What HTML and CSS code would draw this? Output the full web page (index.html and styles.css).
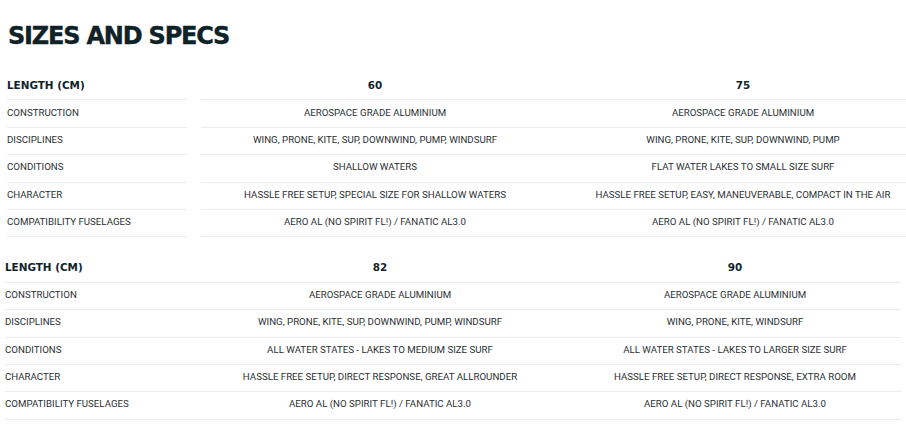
FILE: index.html
```html
<!DOCTYPE html>
<html>
<head>
<meta charset="utf-8">
<link rel="stylesheet" href="styles.css">
</head>
<body>
<main class="page">
  <h1 class="title">SIZES AND SPECS</h1>
  <div class="specs specs-a">
    <div class="cell label head">LENGTH (CM)</div>
    <div class="cell value head">60</div>
    <div class="cell value head">75</div>
    <div class="cell label">CONSTRUCTION</div>
    <div class="cell value">AEROSPACE GRADE ALUMINIUM</div>
    <div class="cell value">AEROSPACE GRADE ALUMINIUM</div>
    <div class="cell label">DISCIPLINES</div>
    <div class="cell value">WING, PRONE, KITE, SUP, DOWNWIND, PUMP, WINDSURF</div>
    <div class="cell value">WING, PRONE, KITE, SUP, DOWNWIND, PUMP</div>
    <div class="cell label">CONDITIONS</div>
    <div class="cell value">SHALLOW WATERS</div>
    <div class="cell value">FLAT WATER LAKES TO SMALL SIZE SURF</div>
    <div class="cell label">CHARACTER</div>
    <div class="cell value">HASSLE FREE SETUP, SPECIAL SIZE FOR SHALLOW WATERS</div>
    <div class="cell value">HASSLE FREE SETUP, EASY, MANEUVERABLE, COMPACT IN THE AIR</div>
    <div class="cell label">COMPATIBILITY FUSELAGES</div>
    <div class="cell value">AERO AL (NO SPIRIT FL!) / FANATIC AL3.0</div>
    <div class="cell value">AERO AL (NO SPIRIT FL!) / FANATIC AL3.0</div>
  </div>
  <div class="specs specs-b">
    <div class="cell label head">LENGTH (CM)</div>
    <div class="cell value head">82</div>
    <div class="cell value head">90</div>
    <div class="cell label">CONSTRUCTION</div>
    <div class="cell value">AEROSPACE GRADE ALUMINIUM</div>
    <div class="cell value">AEROSPACE GRADE ALUMINIUM</div>
    <div class="cell label">DISCIPLINES</div>
    <div class="cell value">WING, PRONE, KITE, SUP, DOWNWIND, PUMP, WINDSURF</div>
    <div class="cell value">WING, PRONE, KITE, WINDSURF</div>
    <div class="cell label">CONDITIONS</div>
    <div class="cell value">ALL WATER STATES - LAKES TO MEDIUM SIZE SURF</div>
    <div class="cell value">ALL WATER STATES - LAKES TO LARGER SIZE SURF</div>
    <div class="cell label">CHARACTER</div>
    <div class="cell value">HASSLE FREE SETUP, DIRECT RESPONSE, GREAT ALLROUNDER</div>
    <div class="cell value">HASSLE FREE SETUP, DIRECT RESPONSE, EXTRA ROOM</div>
    <div class="cell label">COMPATIBILITY FUSELAGES</div>
    <div class="cell value">AERO AL (NO SPIRIT FL!) / FANATIC AL3.0</div>
    <div class="cell value">AERO AL (NO SPIRIT FL!) / FANATIC AL3.0</div>
  </div>
</main>
</body>
</html>
```
FILE: styles.css
```css
html, body {
  margin: 0;
  padding: 0;
  background: #ffffff;
  overflow: hidden;
}
.page {
  width: 906px;
  overflow: hidden;
  font-family: Roboto, "Liberation Sans", sans-serif;
  color: #2a2f33;
}
.title {
  margin: 0;
  padding: 22px 0 0 8px;
  height: 48px;
  box-sizing: border-box;
  font-family: "DejaVu Sans", sans-serif;
  font-weight: 900;
  font-size: 24px;
  line-height: 28px;
  color: #0f2228;
  letter-spacing: -1.2px;
  -webkit-text-stroke: 0.4px #0f2228;
}
.specs {
  display: grid;
  grid-auto-rows: 27.4px;
}
.specs-a {
  margin-top: 25px;
  margin-left: 7px;
  width: 930px;
  grid-template-columns: 194px 348px 388px;
}
.specs-b {
  margin-top: 18px;
  margin-left: 5px;
  width: 896px;
  grid-template-columns: 186px 378px 332px;
}
.cell {
  display: flex;
  align-items: center;
  border-bottom: 1px solid #ececec;
  font-size: 9.7px;
  white-space: nowrap;
  padding-bottom: 3px;
}
.value {
  justify-content: center;
}
.specs-a .label {
  margin-right: 14px;
}
.head {
  font-family: "DejaVu Sans", sans-serif;
  font-weight: bold;
  font-size: 10.4px;
  color: #10232a;
}
```
